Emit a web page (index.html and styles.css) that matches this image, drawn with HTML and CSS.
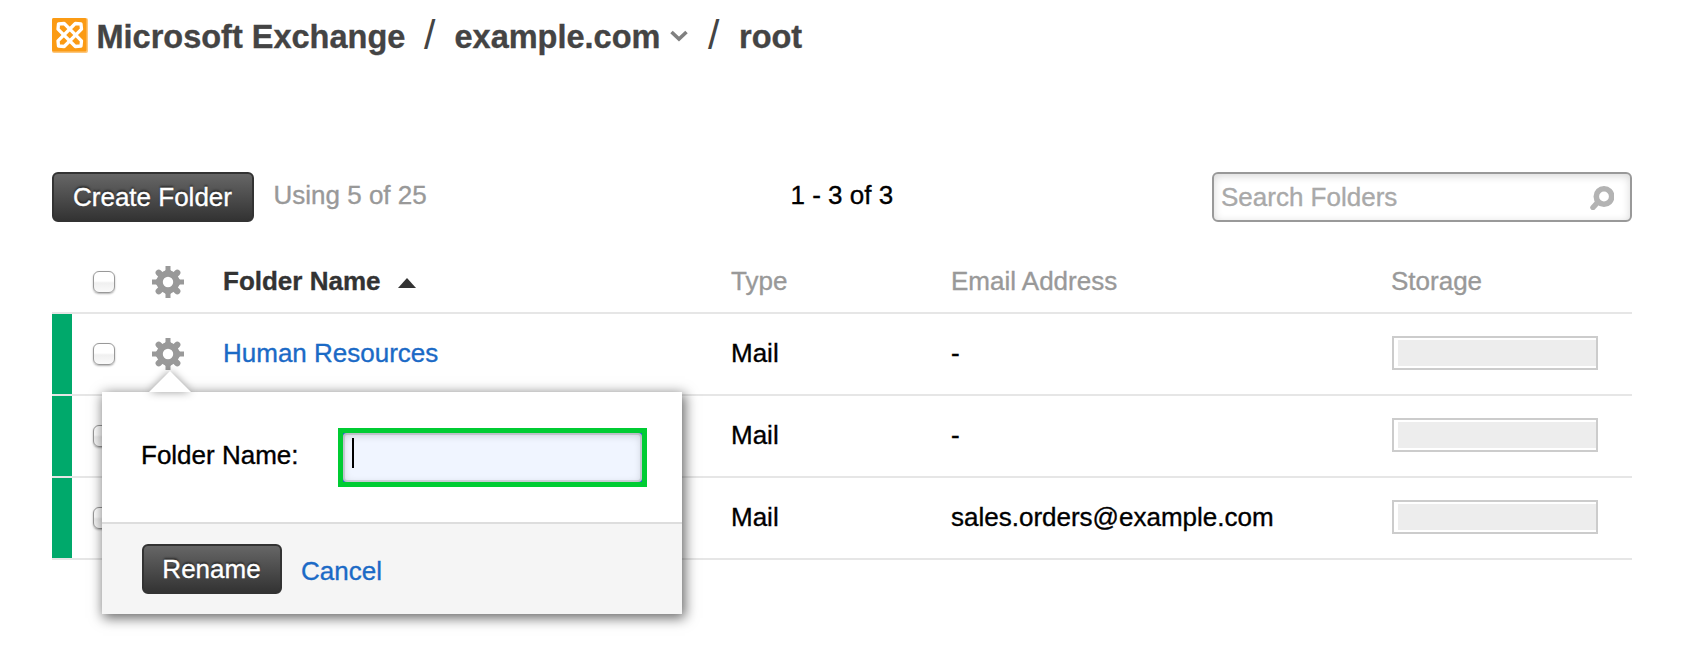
FILE: index.html
```html
<!DOCTYPE html>
<html lang="en">
<head>
<meta charset="utf-8">
<title>Microsoft Exchange</title>
<link rel="stylesheet" href="styles.css">
</head>
<body>
<svg class="defs" width="0" height="0" aria-hidden="true">
  <symbol id="gear" viewBox="-16 -16 32 32">
    <circle r="8.3" fill="none" stroke="#999" stroke-width="6.2"/>
    <path d="M-4.500-10L-2.5-12V-16H2.5V-12L4.500-10ZM-4.500 10L-2.5 12V16H2.5V12L4.500 10ZM-10-4.500L-12-2.5H-16V2.5H-12L-10 4.500ZM10-4.500L12-2.5H16V2.5H12L10 4.500Z" fill="#999"/>
    <path d="M-7-7L-9.3-9.3M7-7L9.3-9.3M-7 7L-9.3 9.3M7 7L9.3 9.3" stroke="#999" stroke-width="6.2" stroke-linecap="round"/>
  </symbol>
</svg>
<header class="crumbs">
  <svg class="logo" width="36" height="35" viewBox="0 0 36 35">
    <rect width="36" height="35" rx="2" fill="#fdc77c"/>
    <rect width="34.500" height="33.500" rx="1.500" fill="#fb9b14"/>
    <g fill="none" stroke="#fff" stroke-width="3.300" stroke-linejoin="round">
      <path d="M6.500 6L12.200 5.500L29.500 22.800L29 28L23.300 28.500L6 11.200Z"/>
      <path d="M29 6L23.300 5.500L6 22.800L6.500 28L12.200 28.500L29.500 11.200Z"/>
    </g>
  </svg>
  <h1 class="crumb first">Microsoft Exchange</h1>
  <span class="slash">/</span>
  <h1 class="crumb domain">example.com</h1>
  <svg class="chevron" width="18" height="12" viewBox="0 0 18 12"><path d="M1.5 2L9 9L16.500 2" fill="none" stroke="#808080" stroke-width="3.6"/></svg>
  <span class="slash second">/</span>
  <h1 class="crumb root">root</h1>
</header>
<main>
  <div class="toolbar">
    <button class="btn create">Create Folder</button>
    <span class="usage">Using 5 of 25</span>
    <span class="range">1 - 3 of 3</span>
    <div class="search">
      <span>Search Folders</span>
      <svg width="24" height="24" viewBox="0 0 24 24"><circle cx="14" cy="10.500" r="7.700" fill="none" stroke="#b3b3b3" stroke-width="5.600"/><path d="M8 16L3 21.500" stroke="#b3b3b3" stroke-width="5.500" stroke-linecap="round"/></svg>
    </div>
  </div>
  <section class="table">
    <div class="row head">
      <div class="select"><i class="check"></i></div>
      <svg class="gear"><use href="#gear" width="32" height="32"/></svg>
      <div class="text name">Folder Name <i class="sort"></i></div>
      <div class="text">Type</div>
      <div class="text">Email Address</div>
      <div class="text">Storage</div>
    </div>
    <div class="row">
      <div class="select"><i class="bar"></i><i class="check"></i></div>
      <svg class="gear"><use href="#gear" width="32" height="32"/></svg>
      <div class="text"><a>Human Resources</a></div>
      <div class="text">Mail</div>
      <div class="text">-</div>
      <div class="storage"></div>
      <form class="popup">
        <svg class="tip" width="52" height="26" viewBox="0 0 52 26"><path d="M5 26L26 5L47 26Z" fill="#fff"/></svg>
        <div class="fields">
          <label>Folder Name:</label>
          <div class="field"><div class="input"><i class="caret"></i></div></div>
        </div>
        <div class="actions">
          <button type="button" class="btn rename">Rename</button>
          <a class="cancel">Cancel</a>
        </div>
      </form>
    </div>
    <div class="row">
      <div class="select"><i class="bar"></i><i class="check"></i></div>
      <div></div>
      <div></div>
      <div class="text">Mail</div>
      <div class="text">-</div>
      <div class="storage"></div>
    </div>
    <div class="row">
      <div class="select"><i class="bar"></i><i class="check"></i></div>
      <div></div>
      <div></div>
      <div class="text">Mail</div>
      <div class="text">sales.orders@example.com</div>
      <div class="storage"></div>
    </div>
  </section>
</main>
</body>
</html>
```

FILE: styles.css
```css
* { box-sizing: border-box; }

body {
  margin: 0;
  padding: 0 55px 0 52px;
  height: 662px;
  overflow: hidden;
  background: #fff;
  color: #000;
  font: 26px/30px "Liberation Sans", Arial, sans-serif;
  -webkit-text-stroke: .35px;
}

.defs { position: absolute; }

/* Breadcrumb heading */
.crumbs {
  display: flex;
  align-items: flex-start;
  height: 172px;
  padding-top: 18px;
  color: #444;
}
.logo { flex: none; }
.crumb {
  margin: 0;
  font-size: 32.5px;
  line-height: 39px;
  white-space: nowrap;
}
.first { width: 335px; padding-left: 8.5px; }
.slash {
  width: 20px;
  padding-left: 1px;
  font-size: 41px;
  line-height: 35px;
  -webkit-text-stroke: 0;
}
.domain { width: 226px; padding-left: 11.5px; }
.chevron { margin: 12px 19px 0 1px; }
.second { width: 16px; }
.root { padding-left: 16px; }

/* Toolbar */
.toolbar {
  display: grid;
  grid-template-columns: 202px 538px 420px 420px;
  height: 50px;
}
.btn {
  height: 50px;
  padding: 0;
  border: 2px solid #333;
  border-radius: 6px;
  background: linear-gradient(#666, #333);
  color: #fff;
  font: inherit;
  line-height: 45px;
  text-indent: -1px;
  text-shadow: 0 -2px 2px rgba(0, 0, 0, .5);
}
.create { width: 202px; }
.rename { width: 140px; }
.usage { padding-left: 19.5px; color: #999; line-height: 47px; }
.range { margin-left: -1.5px; line-height: 47px; }
.search {
  display: flex;
  justify-content: space-between;
  height: 50px;
  padding: 0 16px 0 7px;
  border: 2px solid #999;
  border-radius: 6px;
  box-shadow: inset 0 2px 8px rgba(0, 0, 0, .16);
  color: #a9a9a9;
  line-height: 46px;
}
.search svg { margin-top: 12px; }

/* Folder table */
.table { padding-top: 28px; }
.row {
  position: relative;
  display: grid;
  grid-template-columns: 100px 71px 508px 220px 441px 240px;
  align-items: center;
  height: 82px;
  border-bottom: 2px solid #e6e6e6;
}
.head { height: 64px; color: #999; }
.text { padding-bottom: 2px; white-space: nowrap; }
.head .text { padding-bottom: 1px; }
.head .text:last-child { margin-left: -1px; }
.name { color: #333; font-weight: bold; }
.sort {
  display: inline-block;
  margin: 0 0 2px 10px;
  border: 9px solid transparent;
  border-top: 0;
  border-bottom: 10px solid #333;
}
.select { display: flex; align-items: center; height: 100%; padding-left: 41px; }
.bar { width: 20px; height: 100%; margin: 0 21px 0 -41px; background: #00a96b; }
.check {
  width: 22px;
  height: 22px;
  border: 1.5px solid #999;
  border-radius: 6px;
  background: linear-gradient(#fff 45%, #f0f0f0 55%, #fafafa);
  box-shadow: 0 1px 2px rgba(0, 0, 0, .3);
}
.head .check { margin-top: 2px; }
.gear { width: 32px; height: 32px; }
.head .gear { margin-top: 2px; }
a { color: #1b6ac6; }
.storage {
  width: 206px;
  height: 34px;
  margin-bottom: 2px;
  padding: 2px 0 2px 4px;
  border: 2px solid #ccc;
  background: #ededed content-box;
}

/* Rename popup, floating over the rows */
.popup {
  position: absolute;
  z-index: 2;
  top: 78px;
  left: 50px;
  width: 580px;
  height: 222px;
  background: #fff;
  box-shadow: 2px 3px 12px 1px rgba(0, 0, 0, .6);
}
.tip {
  position: absolute;
  top: -26px;
  left: 42px;
  filter: drop-shadow(0 0 4px rgba(0, 0, 0, .4));
}
.fields { display: flex; height: 130px; padding: 36px 0 0 39px; }
.fields label { width: 197px; line-height: 54px; }
.field {
  width: 309px;
  height: 59px;
  border: 5px solid #00cc33;
  background: #1b6ac6;
}
.input {
  height: 49px;
  padding: 5px 9px;
  border-radius: 4px;
  background: #f0f5ff;
  box-shadow: inset 0 2px 8px rgba(0, 0, 0, .18), inset 0 0 0 2px rgba(0, 0, 0, .12);
}
.caret { display: block; width: 2px; height: 30px; background: #000; }
.actions {
  display: flex;
  height: 92px;
  padding: 20px 40px;
  border-top: 2px solid #ddd;
  background: #f5f5f5;
}
.cancel { padding-left: 19px; line-height: 54px; }
```
